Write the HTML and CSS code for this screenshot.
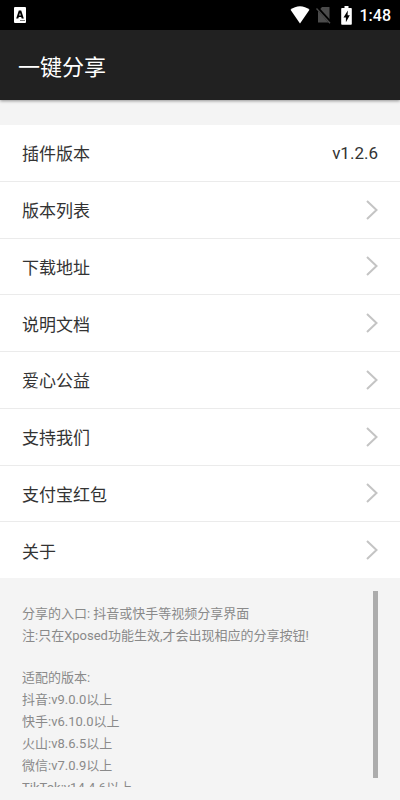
FILE: index.html
```html
<!DOCTYPE html>
<html lang="zh-CN">
<head>
<meta charset="utf-8">
<meta name="viewport" content="width=device-width, initial-scale=1">
<title>一键分享</title>
<link rel="stylesheet" href="styles.css">
</head>
<body>
<div class="status">
  <svg class="status-app" width="12" height="16" viewBox="0 0 12 16" aria-hidden="true">
    <rect width="12" height="16" rx="1" fill="#fff"/>
    <path fill-rule="evenodd" d="M4.800 3.500h2.400L9.800 11.500H7.700L7.200 10H4.800L4.300 11.500H2.200ZM6 5.800 5.200 8.500h1.600Z" fill="#000"/>
    <path d="M6 13.500h5" stroke="#777" stroke-width="1"/>
  </svg>
  <svg class="status-wifi" width="20" height="18" viewBox="0 0 20 18" aria-hidden="true">
    <path d="M.5 3.700C6-1 14-1 19.500 3.700L10 17.500Z" fill="#fff"/>
  </svg>
  <svg class="status-sim" width="16" height="18" viewBox="0 0 16 18" aria-hidden="true">
    <path d="M6 1h7.500v15.500H2V5.500Z" fill="#4b4b4b"/>
    <path d="M1 1.500 15 17" stroke="#000" stroke-width="3"/>
    <path d="M.5 2.500 14 17.300" stroke="#4b4b4b" stroke-width="1.300"/>
  </svg>
  <svg class="status-battery" width="11" height="19" viewBox="0 0 11 19" aria-hidden="true">
    <path d="M3.500 0h4v2H10q.8 0 .8.800V18q0 .800-.8.800H1Q.2 18.800.2 18V2.800Q.2 2 1 2h2.500Z" fill="#fff"/>
    <path d="M6.800 4.500 2.500 11.500h2.400v4.700L8.800 9.200H6.600Z" fill="#000"/>
  </svg>
  <span class="clock">1:48</span>
</div>
<header class="bar"><h1 class="title">一键分享</h1></header>
<main class="main">
  <ul class="list">
    <li class="item"><div class="row"><span>插件版本</span><span>v1.2.6</span></div></li>
    <li class="item"><a class="row" href="#versions">版本列表<svg class="chevron" viewBox="0 0 12 20" aria-hidden="true"><path d="M1 1 10.500 10 1 19"/></svg></a></li>
    <li class="item"><a class="row" href="#download">下载地址<svg class="chevron" viewBox="0 0 12 20" aria-hidden="true"><path d="M1 1 10.500 10 1 19"/></svg></a></li>
    <li class="item"><a class="row" href="#docs">说明文档<svg class="chevron" viewBox="0 0 12 20" aria-hidden="true"><path d="M1 1 10.500 10 1 19"/></svg></a></li>
    <li class="item"><a class="row" href="#charity">爱心公益<svg class="chevron" viewBox="0 0 12 20" aria-hidden="true"><path d="M1 1 10.500 10 1 19"/></svg></a></li>
    <li class="item"><a class="row" href="#support">支持我们<svg class="chevron" viewBox="0 0 12 20" aria-hidden="true"><path d="M1 1 10.500 10 1 19"/></svg></a></li>
    <li class="item"><a class="row" href="#alipay">支付宝红包<svg class="chevron" viewBox="0 0 12 20" aria-hidden="true"><path d="M1 1 10.500 10 1 19"/></svg></a></li>
    <li class="item"><a class="row" href="#about">关于<svg class="chevron" viewBox="0 0 12 20" aria-hidden="true"><path d="M1 1 10.500 10 1 19"/></svg></a></li>
  </ul>
  <section class="notes">
    <div class="notes-text">
      <p>分享的入口: 抖音或快手等视频分享界面<br>注:只在Xposed功能生效,才会出现相应的分享按钮!</p>
      <p>适配的版本:<br>抖音:v9.0.0以上<br>快手:v6.10.0以上<br>火山:v8.6.5以上<br>微信:v7.0.9以上<br>TikTok:v14.4.6以上</p>
    </div>
    <div class="thumb"></div>
  </section>
</main>
</body>
</html>
```
FILE: styles.css
```css
* { box-sizing: border-box; }

body {
  display: flex;
  flex-direction: column;
  height: 100vh;
  margin: 0;
  background: #f4f4f4;
  color: #333;
  font-family: Roboto, "Noto Sans CJK SC", sans-serif;
  font-size: 17px;
}

.status {
  display: flex;
  flex: none;
  align-items: center;
  height: 30px;
  padding: 0 9px 0 14px;
  background: #000;
  color: #fff;
}

.status-app { margin-right: auto; }
.status-sim { margin-left: 6px; }
.status-battery { margin: 0 8px 0 9px; }

.clock {
  font-size: 16px;
  font-weight: 500;
}

.bar {
  display: flex;
  flex: none;
  align-items: center;
  height: 70px;
  padding: 0 18px;
  background: #212121;
  box-shadow: 0 1px 3px rgba(0, 0, 0, 0.4);
}

.title {
  margin: 0;
  color: #fff;
  font-size: 22px;
  font-weight: 400;
}

.main {
  display: flex;
  flex: 1;
  flex-direction: column;
  min-height: 0;
  padding-top: 25px;
}

.list {
  display: flex;
  flex: 1;
  flex-direction: column;
  margin: 0;
  padding: 0;
  background: #fff;
  list-style: none;
}

.item {
  display: flex;
  flex: 1;
  border-bottom: 1px solid #ebebeb;
}

.item:last-child { border-bottom: 0; }

.row {
  display: flex;
  flex: 1;
  align-items: center;
  justify-content: space-between;
  padding: 0 22px;
  color: inherit;
  text-decoration: none;
}

.chevron {
  width: 12px;
  height: 20px;
  fill: none;
  stroke: #c4c4c4;
  stroke-width: 2;
}

.notes {
  display: flex;
  flex: none;
  gap: 12px;
  height: 222px;
  padding: 13px 22px;
  color: #8a8a8a;
  font-size: 13px;
  line-height: 22px;
}

.notes-text {
  flex: 1;
  overflow: hidden;
  padding-top: 12px;
}

.notes-text p { margin: 0 0 20px; }

.thumb {
  width: 5px;
  height: 187px;
  background: #acacac;
}
```
